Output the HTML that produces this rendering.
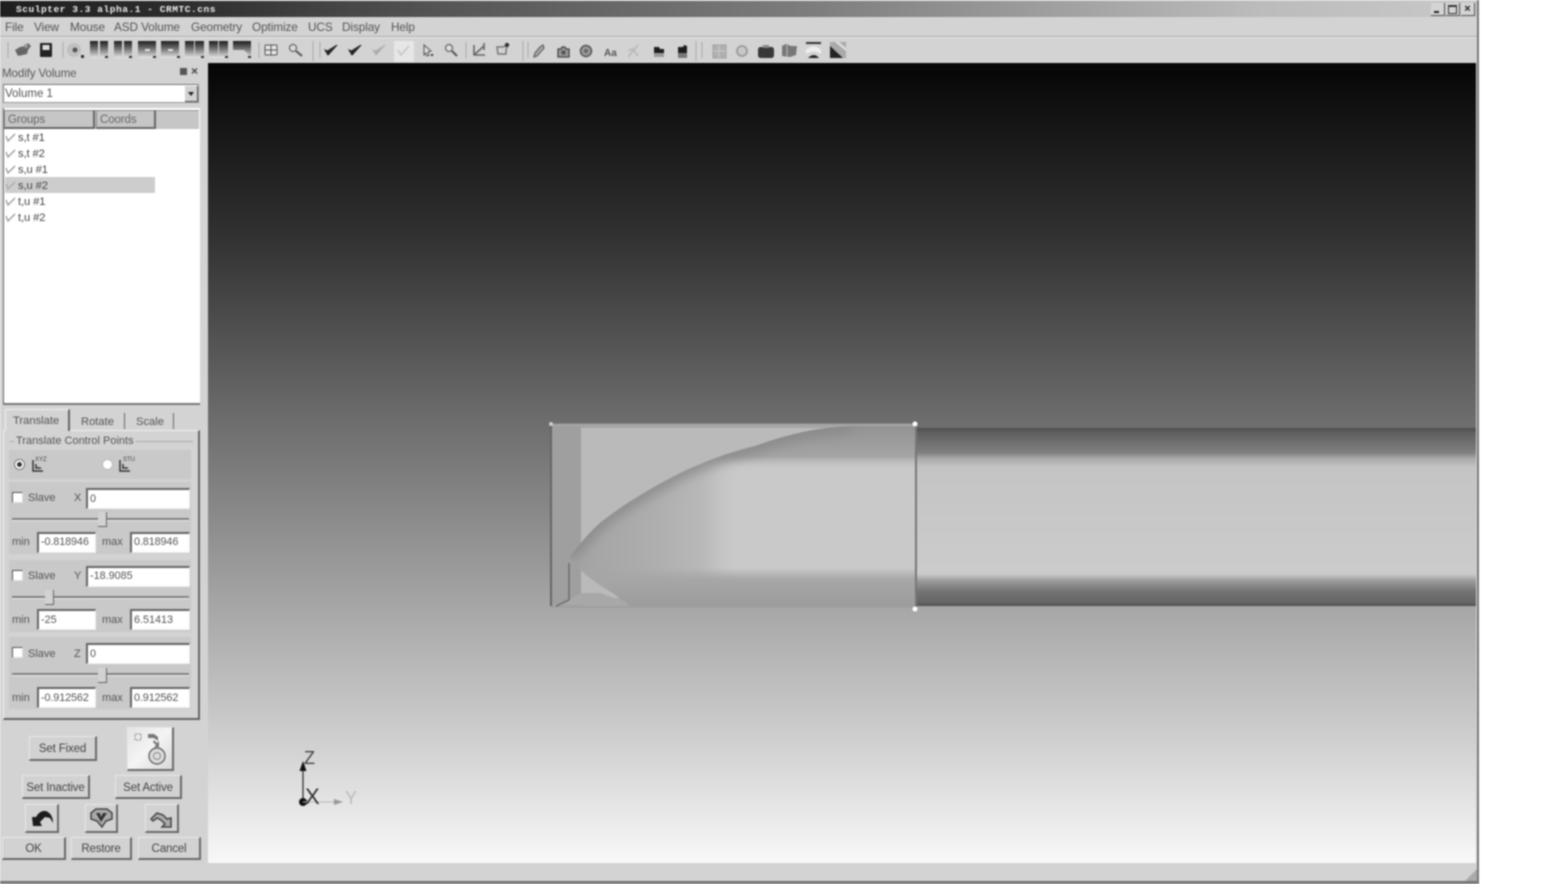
<!DOCTYPE html>
<html><head><meta charset="utf-8"><title>Sculptor</title>
<style>
html,body{margin:0;padding:0;background:#fff;width:1555px;height:884px;overflow:hidden}
#app{position:absolute;left:0;top:0;width:1555px;height:884px;font-family:"Liberation Sans",sans-serif;font-size:11.5px;color:#555;filter:blur(.7px)}
.a{position:absolute;white-space:nowrap}
.b{position:absolute;background:#d2d2d2;border:1px solid;border-color:#e8e8e8 #6a6a6a #6a6a6a #e8e8e8;border-width:1px 2px 2px 1px;box-sizing:border-box;text-align:center;color:#444;font-size:11.5px;letter-spacing:-.15px}
.i{position:absolute;background:#fff;border:1px solid;border-color:#666 #eee #eee #666;border-width:2px 1px 1px 2px;box-sizing:border-box;font-size:10.8px;padding:3px 0 0 2px;color:#555;height:21px}
.f{position:absolute;background:#c9c9c9;left:9px;width:182px}
.s{position:absolute;left:12px;width:177px;height:2px;background:#808080;border-bottom:1px solid #eee}
.t{position:absolute;width:8px;height:14px;background:#d2d2d2;border-right:1px solid #666;border-bottom:1px solid #666}
.c{position:absolute;left:12px;width:11px;height:11px;background:#fff;border:1px solid;border-color:#555 #ddd #ddd #555;box-sizing:border-box}
.m{position:absolute;top:20px;color:#555;font-size:11.8px;letter-spacing:-.1px}
.r{position:absolute;left:18px;font-size:11.2px;color:#444;letter-spacing:-.1px}
.k{position:absolute;left:5px;width:12px;height:10px}
.l{position:absolute;font-size:11px;color:#555}
.h{position:absolute;top:110px;height:19px;border:1px solid;border-color:#888 #666 #666 #888;border-width:1px 2px 2px 1px;box-sizing:border-box;padding:3px 0 0 3px;font-size:11.5px;color:#666;background:#c6c6c6;letter-spacing:-.1px}
</style></head><body>
<div id="app">
<!-- window -->
<div class="a" style="left:0;top:0;width:1479px;height:884px;background:#d3d3d3;border-right:2px solid #777;box-sizing:border-box"></div>
<div class="a" style="left:0;top:881px;width:1479px;height:3px;background:#777"></div>
<div class="a" style="left:0;top:1px;width:1477px;height:16px;background:linear-gradient(90deg,#1e1e1e 0,#2c2c2c 12%,#555 30%,#7d7d7d 55%,#bbb 85%,#c8c8c8 100%)"></div>
<div class="a" style="left:16px;top:4px;font:bold 9.5px 'Liberation Mono',monospace;color:#eee;letter-spacing:.55px">Sculpter 3.3 alpha.1 - CRMTC.cns</div>
<div class="a" style="left:1431px;top:3px;width:13px;height:12px;background:#d4d4d4;border-right:1px solid #555;border-bottom:1px solid #555"><div class="a" style="left:3px;top:8px;width:5px;height:2px;background:#222"></div></div>
<div class="a" style="left:1446px;top:3px;width:13px;height:12px;background:#d4d4d4;border-right:1px solid #555;border-bottom:1px solid #555"><div class="a" style="left:2px;top:2px;width:7px;height:6px;border:1px solid #333;border-top-width:2px"></div></div>
<div class="a" style="left:1461px;top:3px;width:13px;height:12px;background:#d4d4d4;border-right:1px solid #555;border-bottom:1px solid #555;font:bold 11px/12px 'Liberation Sans',sans-serif;text-align:center;color:#222">×</div>

<!-- menu -->
<span class="m" style="left:5px">File</span><span class="m" style="left:34px">View</span><span class="m" style="left:70px">Mouse</span><span class="m" style="left:114px">ASD Volume</span><span class="m" style="left:191px">Geometry</span><span class="m" style="left:252px">Optimize</span><span class="m" style="left:308px">UCS</span><span class="m" style="left:342px">Display</span><span class="m" style="left:391px">Help</span>
<div class="a" style="left:0;top:36px;width:1477px;height:1px;background:#aaa"></div>
<div class="a" style="left:0;top:37px;width:1477px;height:1px;background:#eaeaea"></div>

<!-- toolbar -->
<svg class="a" style="left:0;top:38px" width="860" height="25" viewBox="0 38 860 25">
<defs><linearGradient id="tb" gradientUnits="userSpaceOnUse" x1="0" y1="41" x2="0" y2="58"><stop offset="0" stop-color="#1c1c1c"/><stop offset=".45" stop-color="#707070"/><stop offset="1" stop-color="#e6e6e6"/></linearGradient></defs>
<g stroke="#aaa" fill="none"><path d="M8 42v16M63 42v16M313 41v20M320 42v16M523 41v20M528 42v16M696 41v20M702 42v16M259 42v16M466 42v16"/></g>
<path d="M15 50l5-3 5-1 3-3 3 3-3 4-1 4-9 2z" fill="#666"/><circle cx="26" cy="46" r="2" fill="#999"/>
<rect x="40" y="43" width="12" height="14" rx="1" fill="#222"/><rect x="42.500" y="45" width="7" height="5" fill="#ddd"/>
<circle cx="74" cy="50" r="7" fill="#c0c0c0"/><circle cx="75" cy="50" r="2.500" fill="#555"/>
<rect x="81" y="55" width="3" height="3" fill="#333"/>
<g fill="url(#tb)">
<path d="M90 41h8v17h-8zM100 41h8v17h-8z"/>
<path d="M114 41h8v17h-8zM124 41h8v17h-8z"/>
<path d="M138 41h18v17h-18z"/><path d="M161 41h18v17h-18z"/>
<path d="M185 41h9v17h-9zM195 41h9v17h-9z"/><path d="M209 41h9v17h-9zM219 41h9v17h-9z"/>
<path d="M233 41h18v17l-4-5-3-3h-11z"/>
</g>
<g fill="#e6e6e6"><rect x="145" y="49" width="5" height="2"/><rect x="168" y="49" width="5" height="2"/></g>
<g fill="#333"><rect x="105" y="56" width="3" height="2"/><rect x="129" y="56" width="3" height="2"/><rect x="153" y="56" width="3" height="2"/><rect x="177" y="56" width="3" height="2"/><rect x="201" y="56" width="3" height="2"/><rect x="225" y="56" width="3" height="2"/><rect x="248" y="56" width="3" height="2"/></g>
<rect x="265" y="45" width="12" height="10" rx="1" fill="#e4e4e4" stroke="#555"/><path d="M271 45v10M265 50h12" stroke="#555"/>
<circle cx="293" cy="48" r="3.500" fill="#ddd" stroke="#777" stroke-width="1.500"/><path d="M296 51l6 5" stroke="#555" stroke-width="2"/>
<path d="M325 50l3 5 9-10-8 5-1 1z" fill="#222" stroke="#222"/><path d="M349 50l3 5 9-10-8 5-1 1z" fill="#222" stroke="#222"/>
<path d="M373 50l3 5 9-10-8 5-1 1z" fill="#aaa" stroke="#b2b2b2"/>
<rect x="394" y="41" width="20" height="21" fill="#e6e6e6"/><path d="M398 50l3 5 8-9" fill="none" stroke="#c4c4c4" stroke-width="1.500"/>
<path d="M424 45v10l2-2 1 3 2-1-1-3 3-1z" fill="#ddd" stroke="#555"/><rect x="431" y="54" width="2" height="2" fill="#333"/>
<circle cx="449" cy="48" r="3.500" fill="#ddd" stroke="#777" stroke-width="1.500"/><path d="M452 51l5 5" stroke="#555" stroke-width="2"/>
<path d="M474 45v10h11M474 55l10-9M484 43v7" fill="none" stroke="#666" stroke-width="1.600"/>
<path d="M497 47h6l4-2-1 6v3h-8z" fill="none" stroke="#777" stroke-width="1.500"/><circle cx="507" cy="45" r="2.200" fill="#333"/>
<path d="M534 57l3-1 7-8-1-3-3 2-5 6z" fill="#aaa" stroke="#666" stroke-width="1.300"/>
<path d="M558 49h3l1-2h3l1 2h3v8h-11z" fill="#999" stroke="#444" stroke-width="1.300"/><circle cx="563.500" cy="52.500" r="2.300" fill="#555"/>
<circle cx="586" cy="51" r="5.500" fill="#999" stroke="#555" stroke-width="1.500"/><circle cx="586" cy="51" r="2" fill="#666"/>
<text x="604" y="56" font-family="Liberation Sans" font-weight="bold" font-size="10" fill="#555">Aa</text>
<path d="M628 57l6-7 4-5M632 48l6 8M628 50h6" stroke="#bbb" stroke-width="1.800" fill="none"/>
<path d="M654 47h5l1 2h4v4h-10z" fill="#1c1c1c"/><rect x="654" y="53" width="10" height="4" fill="#999"/>
<path d="M678 47h5l1-2 3 1v3 4h-9z" fill="#1c1c1c"/><rect x="678" y="53" width="9" height="5" fill="#777"/>
<rect x="713" y="45" width="13" height="13" fill="#b0b0b0" stroke="#a0a0a0"/><path d="M713 51h13M719 45v13" stroke="#c8c8c8"/>
<circle cx="742" cy="51" r="5" fill="#c8c8c8" stroke="#999" stroke-width="1.800"/>
<rect x="758" y="47" width="16" height="11" rx="2.500" fill="#383838"/><rect x="763" y="45" width="6" height="3" fill="#888"/>
<path d="M782 46l4-2 5 2h6l-1 9-6 2-8-1z" fill="#777"/><path d="M787 45v12" stroke="#bbb"/>
<rect x="806" y="42" width="15" height="2" fill="#333"/><path d="M806 50q8-7 15 0v2q-8-5-15 0z" fill="#eee"/><path d="M808 58q6-6 11 0z" fill="#222"/><path d="M806 53q8-5 15 0" stroke="#eee" fill="none" stroke-width="2"/>
<path d="M830 42h16v16h-16z" fill="#aaa"/><path d="M830 46l13 12h-13z" fill="#222"/><path d="M835 42h4l7 6v3z" fill="#ddd"/>
</svg>

<!-- panel header -->
<div class="a" style="left:2px;top:67px;font-size:11.6px;letter-spacing:-.12px;color:#5a5a5a">Modify Volume</div>
<div class="a" style="left:180px;top:68px;width:7px;height:7px;background:#555"></div>
<div class="a" style="left:191px;top:64px;font:bold 12px 'Liberation Sans',sans-serif;color:#444">×</div>
<div class="a" style="left:3px;top:84px;width:196px;height:19px;background:#fff;border:1px solid;border-color:#777 #999 #999 #777;box-sizing:border-box;padding:3px 0 0 1px;font-size:11.5px;color:#555">Volume 1</div>
<div class="a" style="left:185px;top:86px;width:13px;height:16px;background:#d2d2d2;border-right:1px solid #555;border-bottom:1px solid #555;box-sizing:border-box"><div class="a" style="left:3px;top:6px;width:0;height:0;border:3px solid transparent;border-top:4px solid #222"></div></div>

<!-- list -->
<div class="a" style="left:3px;top:108px;width:197px;height:297px;background:#fff;border-left:1px solid #666;border-bottom:2px solid #777;box-sizing:border-box"></div>
<div class="a" style="left:4px;top:110px;width:195px;height:19px;background:#c6c6c6;border-top:1px solid #999;box-sizing:border-box"></div>
<div class="h" style="left:4px;width:91px">Groups</div>
<div class="h" style="left:96px;width:60px">Coords</div>
<div class="a" style="left:5px;top:177px;width:150px;height:16px;background:#cdcdcd"></div>
<svg class="k" style="top:132px"><path d="M1 4l2 5 7-7" fill="none" stroke="#999" stroke-width="1.300"/></svg><div class="r" style="top:132px">s,t #1</div>
<svg class="k" style="top:148px"><path d="M1 4l2 5 7-7" fill="none" stroke="#999" stroke-width="1.300"/></svg><div class="r" style="top:148px">s,t #2</div>
<svg class="k" style="top:164px"><path d="M1 4l2 5 7-7" fill="none" stroke="#999" stroke-width="1.300"/></svg><div class="r" style="top:164px">s,u #1</div>
<svg class="k" style="top:180px"><path d="M1 4l2 5 7-7" fill="none" stroke="#aaa" stroke-width="1.300"/></svg><div class="r" style="top:180px">s,u #2</div>
<svg class="k" style="top:196px"><path d="M1 4l2 5 7-7" fill="none" stroke="#999" stroke-width="1.300"/></svg><div class="r" style="top:196px">t,u #1</div>
<svg class="k" style="top:212px"><path d="M1 4l2 5 7-7" fill="none" stroke="#999" stroke-width="1.300"/></svg><div class="r" style="top:212px">t,u #2</div>

<!-- tabs -->
<div class="a" style="left:3px;top:430px;width:197px;height:290px;border:1px solid;border-color:#eee #666 #666 #eee;border-width:1px 2px 2px 1px;box-sizing:border-box"></div>
<div class="a" style="left:5px;top:409px;width:65px;height:22px;background:#d3d3d3;border-top:1px solid #eee;border-left:1px solid #eee;border-right:2px solid #666;box-sizing:border-box"></div>
<div class="a" style="left:13px;top:415px;font-size:11.2px;color:#555">Translate</div>
<div class="a" style="left:81px;top:416px;font-size:11.2px;color:#555">Rotate</div><div class="a" style="left:124px;top:413px;width:1px;height:16px;background:#666"></div>
<div class="a" style="left:136px;top:416px;font-size:11.2px;color:#555">Scale</div><div class="a" style="left:173px;top:413px;width:1px;height:16px;background:#666"></div>
<div class="a" style="left:10px;top:441px;width:183px;height:1px;background:#aaa"></div>
<div class="a" style="left:14px;top:435px;background:#d3d3d3;padding:0 2px;font-size:11px;color:#555">Translate Control Points</div>

<div class="f" style="top:450px;height:29px"></div>
<div class="a" style="left:14px;top:459px;width:11px;height:11px;border-radius:50%;background:#fff;border:1px solid #777;box-sizing:border-box"><div class="a" style="left:2px;top:2px;width:5px;height:5px;border-radius:50%;background:#333"></div></div>
<div class="a" style="left:102px;top:459px;width:11px;height:11px;border-radius:50%;background:#fff;border:1px solid #bbb;box-sizing:border-box"></div>
<svg class="a" style="left:30px;top:455px" width="22" height="20"><path d="M3 5v11h10M6 9v4h5" fill="none" stroke="#333" stroke-width="1.500"/><text x="5" y="6" font-size="6" font-family="Liberation Sans" fill="#444">XYZ</text></svg>
<svg class="a" style="left:117px;top:455px" width="22" height="20"><path d="M3 5v11h10M6 9v4h5" fill="none" stroke="#333" stroke-width="1.500"/><text x="6" y="6" font-size="6" font-family="Liberation Sans" fill="#444">STU</text></svg>

<div class="f" style="top:482px;height:72px"></div>
<div class="c" style="top:492px"></div><div class="l" style="left:28px;top:492px">Slave</div><div class="l" style="left:74px;top:492px">X</div>
<div class="i" style="left:86px;top:488px;width:104px">0</div>
<div class="s" style="top:518px"></div><div class="t" style="left:98px;top:512px"></div>
<div class="l" style="left:12px;top:536px">min</div><div class="i" style="left:37px;top:532px;width:59px;letter-spacing:-.1px;padding-top:2px">-0.818946</div>
<div class="l" style="left:102px;top:536px">max</div><div class="i" style="left:130px;top:532px;width:60px;letter-spacing:-.1px;padding-top:2px">0.818946</div>

<div class="f" style="top:560px;height:72px"></div>
<div class="c" style="top:570px"></div><div class="l" style="left:28px;top:570px">Slave</div><div class="l" style="left:74px;top:570px">Y</div>
<div class="i" style="left:86px;top:566px;width:104px;padding-top:2px">-18.9085</div>
<div class="s" style="top:596px"></div><div class="t" style="left:45px;top:590px"></div>
<div class="l" style="left:12px;top:614px">min</div><div class="i" style="left:37px;top:609px;width:59px">-25</div>
<div class="l" style="left:102px;top:614px">max</div><div class="i" style="left:130px;top:609px;width:60px">6.51413</div>

<div class="f" style="top:637px;height:72px"></div>
<div class="c" style="top:647px"></div><div class="l" style="left:28px;top:648px">Slave</div><div class="l" style="left:74px;top:648px">Z</div>
<div class="i" style="left:86px;top:643px;width:104px">0</div>
<div class="s" style="top:673px"></div><div class="t" style="left:98px;top:668px"></div>
<div class="l" style="left:12px;top:692px">min</div><div class="i" style="left:37px;top:687px;width:59px;letter-spacing:-.1px">-0.912562</div>
<div class="l" style="left:102px;top:692px">max</div><div class="i" style="left:130px;top:687px;width:60px;letter-spacing:-.1px">0.912562</div>

<!-- buttons -->
<div class="b" style="left:29px;top:736px;width:68px;height:25px;line-height:24px">Set Fixed</div>
<div class="b" style="left:127px;top:727px;width:47px;height:44px;background:linear-gradient(135deg,#e4e4e4,#f4f4f4 50%,#d8d8d8)"></div>
<svg class="a" style="left:127px;top:727px" width="47" height="44"><path d="M8 7h6v6H8z" fill="none" stroke="#888" stroke-dasharray="2 1"/><path d="M21 7h6l4 3v4l-4-3h-6zM27 13l3 3 2-2v6h-5l2-2-3-3z" fill="#777"/><circle cx="30" cy="29" r="8" fill="#ddd" stroke="#666" stroke-width="1.400"/><circle cx="30" cy="29" r="3.500" fill="none" stroke="#888"/></svg>
<div class="b" style="left:22px;top:775px;width:68px;height:24px;line-height:24px">Set Inactive</div>
<div class="b" style="left:115px;top:775px;width:67px;height:24px;line-height:24px">Set Active</div>
<div class="b" style="left:25px;top:804px;width:34px;height:29px"></div>
<svg class="a" style="left:25px;top:804px" width="34" height="29"><path d="M7 13l1 9h9l-2-4 5-5 5 1 3 5q0-9-7-12-6-1-10 6z" fill="#1c1c1c"/></svg>
<div class="b" style="left:85px;top:804px;width:33px;height:29px"></div>
<svg class="a" style="left:85px;top:804px" width="33" height="29"><path d="M6 9l5-4h11l5 4v6l-6 2-4 6-5-6-6-2z" fill="#aaa" stroke="#444" stroke-width="1.500"/><path d="M11 9h4l1 4 2-4h4l-6 9z" fill="#333"/></svg>
<div class="b" style="left:145px;top:804px;width:34px;height:29px"></div>
<svg class="a" style="left:145px;top:804px" width="34" height="29"><path d="M6 15l6-6 6 2 4 4 4-1v9h-9l3-3-4-4-4-2-4 3z" fill="#aaa" stroke="#444" stroke-width="1.500"/></svg>
<div class="b" style="left:2px;top:837px;width:64px;height:23px;line-height:23px;padding-right:0">OK</div>
<div class="b" style="left:71px;top:837px;width:61px;height:23px;line-height:23px">Restore</div>
<div class="b" style="left:138px;top:837px;width:63px;height:23px;line-height:23px">Cancel</div>

<!-- viewport -->
<svg class="a" style="left:208px;top:63px" width="1268" height="800" viewBox="208 63 1268 800">
<defs>
<linearGradient id="bg" x1="0" y1="0" x2="0" y2="1"><stop offset="0" stop-color="#050505"/><stop offset=".22" stop-color="#323232"/><stop offset=".42" stop-color="#666"/><stop offset=".68" stop-color="#a6a6a6"/><stop offset=".85" stop-color="#d0d0d0"/><stop offset="1" stop-color="#f8f8f8"/></linearGradient>
<linearGradient id="tube" x1="0" y1="0" x2="0" y2="1"><stop offset="0" stop-color="#4e4e4e"/><stop offset=".03" stop-color="#606060"/><stop offset=".14" stop-color="#808080"/><stop offset=".17" stop-color="#a8a8a8"/><stop offset=".22" stop-color="#c4c4c4"/><stop offset=".82" stop-color="#cbcbcb"/><stop offset=".86" stop-color="#9a9a9a"/><stop offset=".92" stop-color="#727272"/><stop offset=".98" stop-color="#666"/><stop offset="1" stop-color="#4e4e4e"/></linearGradient>
<linearGradient id="lf" gradientUnits="userSpaceOnUse" x1="565" y1="0" x2="735" y2="0"><stop offset="0" stop-color="#a2a2a2"/><stop offset=".5" stop-color="#adadad"/><stop offset=".8" stop-color="#b8b8b8"/><stop offset=".9" stop-color="#c2c2c2"/><stop offset="1" stop-color="#c9c9c9"/></linearGradient>
<linearGradient id="tp" x1="0" y1="0" x2="0" y2="1"><stop offset="0" stop-color="#929292"/><stop offset=".7" stop-color="#a0a0a0" stop-opacity=".9"/><stop offset="1" stop-color="#c9c9c9" stop-opacity="0"/></linearGradient>
<linearGradient id="bt" x1="0" y1="0" x2="0" y2="1"><stop offset="0" stop-color="#a4a4a4" stop-opacity="0"/><stop offset=".3" stop-color="#a6a6a6"/><stop offset="1" stop-color="#9c9c9c"/></linearGradient>
<clipPath id="nc"><path d="M569 557C580 545 590 530 605 519C630 500 655 486 680 473C705 461 730 452 755 446C780 437 810 428 850 426H915V606H630C622 600 615 594 606 589C595 582 580 572 569 557Z"/></clipPath>
<filter id="bl" x="-20%" y="-20%" width="140%" height="140%"><feGaussianBlur stdDeviation="6"/></filter>
</defs>
<rect x="208" y="63" width="1268" height="800" fill="url(#bg)"/>
<rect x="916" y="428" width="560" height="178" fill="url(#tube)"/>
<rect x="551" y="424" width="365" height="183" fill="#a6a6a6"/>
<rect x="581" y="428" width="334" height="170" fill="#bababa"/>
<rect x="552" y="426" width="29" height="180" fill="#9f9f9f"/>
<path d="M581 593h20l30 12h-78l16-5z" fill="#a8a8a8"/>
<g clip-path="url(#nc)">
<rect x="560" y="420" width="360" height="190" fill="url(#lf)"/>
<rect x="700" y="425" width="216" height="45" fill="url(#tp)"/>
<rect x="560" y="568" width="356" height="39" fill="url(#bt)"/>
<path d="M569 557C580 545 590 530 605 519C630 500 655 486 680 473C705 461 730 452 755 446C780 437 810 428 850 426" fill="none" stroke="#888" stroke-width="12" filter="url(#bl)"/>
</g>
<path d="M551 424V606" stroke="#666" stroke-width="2"/>
<path d="M569 563V600L556 606" fill="none" stroke="#666" stroke-width="1.300"/>
<path d="M551 424H915M551 607H915" stroke="#9a9a9a"/>
<path d="M916 424V607" stroke="#777" stroke-width="2"/>
<circle cx="551" cy="424" r="2" fill="#ccc"/><circle cx="915" cy="424" r="2.500" fill="#fff"/><circle cx="915" cy="609" r="2.500" fill="#fff"/>
<path d="M303 802V768" stroke="#333" stroke-width="1.300"/><path d="M303 761l-3.500 10h7z" fill="#111"/>
<circle cx="303" cy="802" r="4" fill="#111"/>
<path d="M303 802H335" stroke="#bbb"/><path d="M334 799l9 3-9 3z" fill="#999"/>
<text x="304" y="764" font-family="Liberation Sans" font-size="18" fill="#444">Z</text>
<text x="305" y="804" font-family="Liberation Sans" font-size="22" fill="#333">X</text>
<text x="345" y="804" font-family="Liberation Sans" font-size="18" fill="#bbb">Y</text>
</svg>

<!-- resize grip -->
<svg class="a" style="left:1464px;top:868px" width="14" height="13"><path d="M1 13L13 1V13z" fill="#aaa"/></svg>
</div>
</body></html>
